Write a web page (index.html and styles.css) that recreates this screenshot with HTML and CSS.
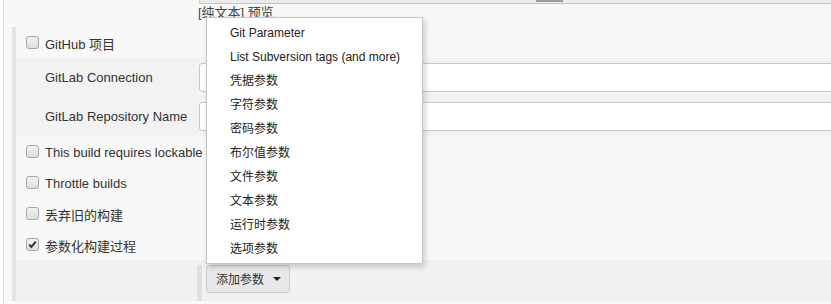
FILE: index.html
```html
<!DOCTYPE html>
<html>
<head>
<meta charset="utf-8">
<link rel="stylesheet" href="styles.css">
</head>
<body>
<div class="page">
  <div class="top">
    <div class="ta-edge"><span class="thumb"></span></div>
    <div class="preview">[纯文本] <a class="link">预览</a></div>
  </div>
  <div class="section">
    <div class="row"><span class="cb"></span><span class="txt">GitHub 项目</span></div>
    <div class="nested">
      <div class="field"><label>GitLab Connection</label><div class="input"></div></div>
      <div class="field"><label>GitLab Repository Name</label><div class="input"></div></div>
    </div>
    <div class="row"><span class="cb"></span><span class="txt">This build requires lockable</span></div>
    <div class="row"><span class="cb"></span><span class="txt">Throttle builds</span></div>
    <div class="row"><span class="cb"></span><span class="txt">丢弃旧的构建</span></div>
    <div class="row"><span class="cb checked"><svg width="11" height="11" viewBox="0 0 11 11"><path d="M2.2 5.6 L4.4 8 L8.8 2.6" fill="none" stroke="#333" stroke-width="2"/></svg></span><span class="txt">参数化构建过程</span></div>
    <div class="actions">
      <span class="vbar"></span>
      <div class="btn">添加参数<span class="caret"></span></div>
    </div>
  </div>
  <ul class="menu">
    <li>Git Parameter</li>
    <li>List Subversion tags (and more)</li>
    <li>凭据参数</li>
    <li>字符参数</li>
    <li>密码参数</li>
    <li>布尔值参数</li>
    <li>文件参数</li>
    <li>文本参数</li>
    <li>运行时参数</li>
    <li>选项参数</li>
  </ul>
</div>
</body>
</html>
```
FILE: styles.css
```css
html, body {
  margin: 0;
  padding: 0;
  background: #fff;
}
body {
  font-family: "Liberation Sans", Arial, "Noto Sans CJK SC", sans-serif;
  font-size: 13px;
  color: #333;
}
.page {
  margin-left: 3px;
  border-left: 1px solid #dcdcdc;
  background: #f8f8f8;
  height: 304px;
  overflow: hidden;
  position: relative;
}
.top {
  height: 27px;
  padding-left: 195px;
}
.ta-edge {
  height: 3px;
  background: #ebebeb;
  border-bottom: 1px solid #c4c4c4;
  border-left: 1px solid #cfcfcf;
  display: flex;
  align-items: flex-start;
}
.thumb {
  display: block;
  margin-left: 336px;
  width: 27px;
  height: 2px;
  background: #9c9c9c;
}
.preview {
  margin-left: -1px;
  margin-top: 1px;
  line-height: 16px;
  color: #444;
  white-space: nowrap;
}
.link {
  color: #444;
  text-decoration: underline;
}
.section {
  margin-left: 8px;
  border-left: 4px solid #e3e3e3;
}
.row {
  height: 31px;
  display: flex;
  align-items: center;
  padding-left: 10px;
  white-space: nowrap;
}
.txt {
  margin-top: 1px;
}
.cb {
  box-sizing: border-box;
  width: 13px;
  height: 13px;
  border: 1px solid #a6a6a6;
  border-radius: 3px;
  background: linear-gradient(#f2f2f2, #dedede);
  margin-right: 6px;
  margin-top: -1px;
  display: flex;
  align-items: center;
  justify-content: center;
  flex: none;
}
.cb svg {
  display: block;
}
.nested {
  background: #f2f2f2;
  padding: 5px 0;
  display: flex;
  flex-direction: column;
  gap: 10px;
}
.field {
  display: flex;
  align-items: center;
  height: 29px;
  padding-left: 29px;
}
.field label {
  width: 154px;
  flex: none;
}
.input {
  flex: 1;
  box-sizing: border-box;
  height: 29px;
  background: #fff;
  border: 1px solid #c8c8c8;
  border-radius: 3px;
  margin-right: -6px;
}
.actions {
  height: 41px;
  background: #f1f1f1;
  padding-left: 181px;
  padding-top: 5px;
  box-sizing: border-box;
  display: flex;
  align-items: flex-start;
}
.vbar {
  width: 5px;
  height: 36px;
  background: #e0e0e0;
  flex: none;
}
.btn {
  box-sizing: border-box;
  margin-left: 4px;
  width: 84px;
  height: 28px;
  border: 1px solid #cbcbcb;
  border-radius: 3px;
  background: #e8e8e8;
  display: flex;
  align-items: center;
  padding-left: 9px;
  padding-bottom: 2px;
  font-size: 12px;
  color: #333;
  white-space: nowrap;
}
.caret {
  width: 0;
  height: 0;
  border-left: 4px solid transparent;
  border-right: 4px solid transparent;
  border-top: 4px solid #222;
  margin-left: 9px;
  margin-top: 2px;
}
.menu {
  position: absolute;
  left: 202px;
  top: 17px;
  width: 215px;
  margin: 0;
  padding: 3px 0 2px;
  list-style: none;
  background: #fff;
  border: 1px solid #c6c6c6;
  box-shadow: 2px 3px 6px rgba(0, 0, 0, 0.18);
  font-size: 12px;
  color: #222;
}
.menu li {
  height: 24px;
  line-height: 24px;
  padding-left: 23px;
  white-space: nowrap;
}
```
